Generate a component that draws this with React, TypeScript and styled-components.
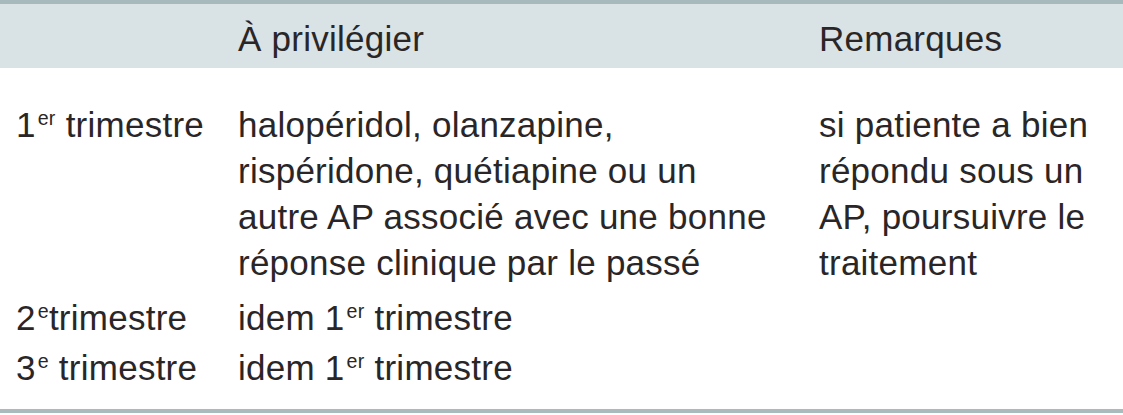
import styled, { createGlobalStyle } from 'styled-components';

const GlobalStyle = createGlobalStyle`
  html, body {
    margin: 0;
    padding: 0;
    background: #ffffff;
  }
`;

const Table = styled.div`
  width: 1123px;
  height: 415px;
  box-sizing: border-box;
  font-family: 'Liberation Sans', Arial, sans-serif;
  font-size: 35px;
  letter-spacing: 0.25px;
  line-height: 46px;
  color: #2a2627;
  border-top: 4px solid #a8b9bd;
  display: flex;
  flex-direction: column;
`;

const Row = styled.div<{ $gap?: number }>`
  display: grid;
  grid-template-columns: 222px 581px 1fr;
  padding-left: 16px;
  margin-top: ${(p) => p.$gap ?? 0}px;
`;

const HeadRow = styled(Row)`
  background: #d9e2e4;
  padding-top: 12px;
  padding-bottom: 6px;
`;

const Cell = styled.div`
  white-space: nowrap;
`;

const Sup = styled.sup`
  font-size: 0.56em;
  line-height: 0;
  vertical-align: 0.62em;
  margin-left: 2px;
`;

const BottomRule = styled.div`
  margin-top: auto;
  margin-bottom: 2px;
  height: 4px;
  background: #a9bbbd;
`;

export default function App() {
  return (
    <>
      <GlobalStyle />
      <Table>
        <HeadRow>
          <Cell />
          <Cell>À privilégier</Cell>
          <Cell>Remarques</Cell>
        </HeadRow>
        <Row $gap={34}>
          <Cell>
            1<Sup>er</Sup> trimestre
          </Cell>
          <Cell>
            halopéridol, olanzapine,
            <br />
            rispéridone, quétiapine ou un
            <br />
            autre AP associé avec une bonne
            <br />
            réponse clinique par le passé
          </Cell>
          <Cell>
            si patiente a bien
            <br />
            répondu sous un
            <br />
            AP, poursuivre le
            <br />
            traitement
          </Cell>
        </Row>
        <Row $gap={9}>
          <Cell>
            2<Sup>e</Sup>trimestre
          </Cell>
          <Cell>
            idem 1<Sup>er</Sup> trimestre
          </Cell>
          <Cell />
        </Row>
        <Row $gap={4}>
          <Cell>
            3<Sup>e</Sup> trimestre
          </Cell>
          <Cell>
            idem 1<Sup>er</Sup> trimestre
          </Cell>
          <Cell />
        </Row>
        <BottomRule />
      </Table>
    </>
  );
}
